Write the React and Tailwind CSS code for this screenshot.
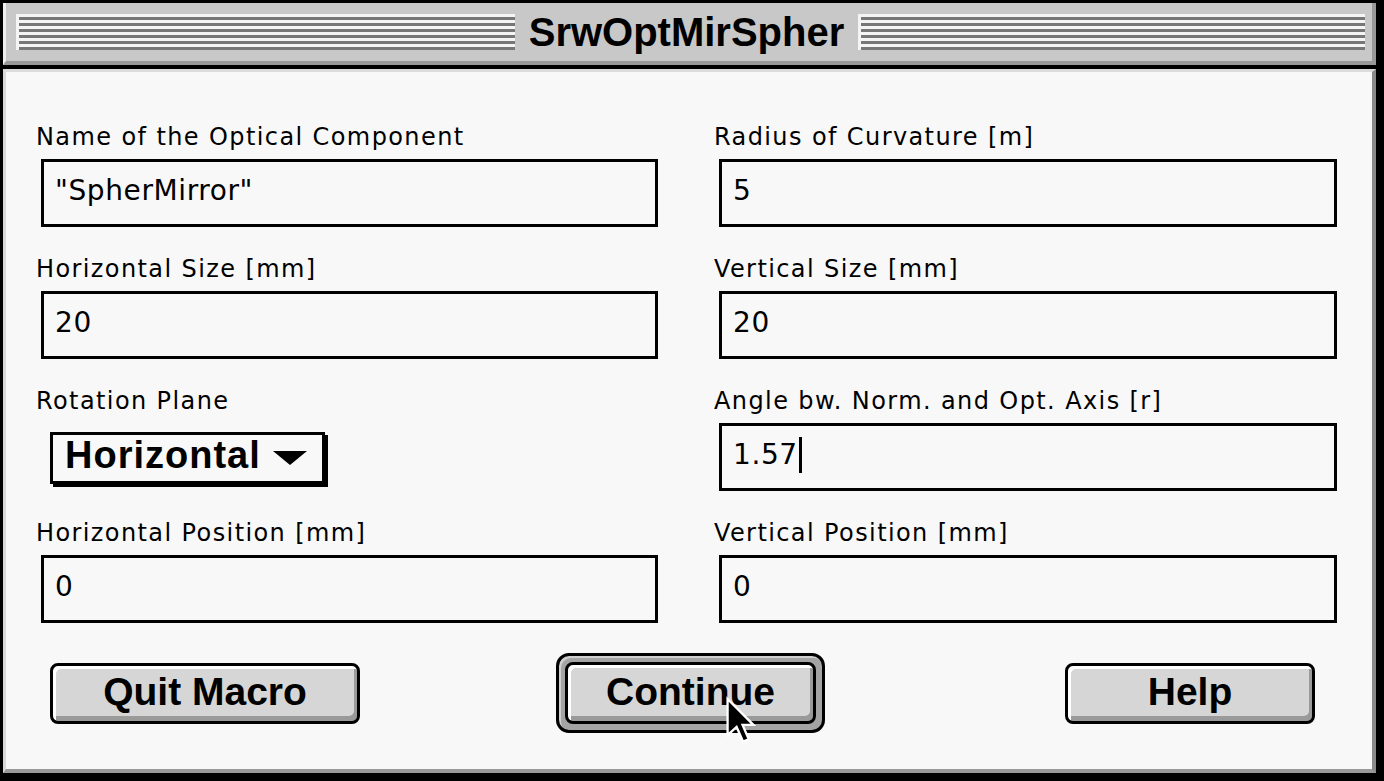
import React from "react";

const sans = { fontFamily: '"DejaVu Sans", "Liberation Sans", sans-serif' };
const chicago = { fontFamily: '"Liberation Sans", Arial, sans-serif' };

function Stripes({ className }) {
  return (
    <div className={"flex flex-col gap-[3px] bg-[#f4f4f4] pt-[3px] " + className}>
      {[0, 1, 2, 3, 4, 5].map((i) => (
        <div key={i} className="ml-[3px] h-[3px] bg-[#777777]" />
      ))}
    </div>
  );
}

function Label({ children }) {
  return (
    <div className="h-[28px] text-[24px] leading-[28px] tracking-[1.4px] text-black whitespace-nowrap" style={sans}>
      {children}
    </div>
  );
}

function TextField({ label, value, caret }) {
  return (
    <div className="flex flex-col">
      <Label>{label}</Label>
      <div className="mt-[8px] ml-[5px] flex h-[68px] items-center border-[3px] border-black bg-[#f8f8f8] pb-[5px] pl-[11px]">
        <span className="text-[28px] leading-[32px] tracking-[0.6px] text-black whitespace-pre" style={sans}>
          {value}
        </span>
        {caret && <span className="ml-[1px] inline-block h-[36px] w-[3px] bg-black" />}
      </div>
    </div>
  );
}

function PopupField({ label, value }) {
  return (
    <div className="flex flex-col">
      <Label>{label}</Label>
      <div className="mt-[17px] ml-[14px] flex h-[52px] w-[275px] items-center border-[3px] border-black bg-[#f8f8f8] pb-[6px] pl-[12px] shadow-[3px_3px_0_#000]">
        <span className="text-[38px] font-bold leading-[38px] tracking-[1px] text-black" style={chicago}>
          {value}
        </span>
        <svg className="ml-[12px] mt-[6px]" width="34" height="14" viewBox="0 0 34 14">
          <polygon points="0,0 34,0 17,14" fill="#000" />
        </svg>
      </div>
    </div>
  );
}

function Button({ children, className }) {
  return (
    <div
      className={
        "flex items-center justify-center rounded-[8px] border-[3px] border-black bg-[#d6d6d6] pb-[4px] shadow-[inset_3px_3px_0_#ffffff,inset_-3px_-5px_0_#9a9a9a] " +
        className
      }
    >
      <span className="text-[39px] font-bold leading-[39px] text-black" style={chicago}>
        {children}
      </span>
    </div>
  );
}

function Cursor() {
  return (
    <svg className="absolute left-[725px] top-[696px]" width="31" height="50" viewBox="0 0 12 19">
      <path d="M1 1 L1 15 L4.5 11.8 L7 17.5 L9.2 16.6 L6.8 11 L11 11 Z" fill="#000" stroke="#fff" strokeWidth="0.9" strokeLinejoin="miter" />
    </svg>
  );
}

export default function App() {
  return (
    <div className="relative flex h-[781px] w-[1384px] flex-col overflow-hidden bg-black pt-[3px] pl-[3px] pr-[8px] pb-[8px]">
      {/* title bar */}
      <div className="flex h-[62px] shrink-0 items-center border-l-[3px] border-r-[4px] border-b-[4px] border-l-[#eeeeee] border-r-[#999999] border-b-[#999999] bg-[#c8c8c8] pl-[10px] pr-[7px]">
        <Stripes className="w-[499px]" />
        <div className="flex w-[343px] justify-center">
          <span className="text-[40px] font-bold leading-[40px] text-black" style={chicago}>
            SrwOptMirSpher
          </span>
        </div>
        <Stripes className="flex-1" />
      </div>
      <div className="h-[4px] shrink-0 bg-black" />

      {/* content */}
      <div className="flex flex-1 flex-col border-t-[3px] border-l-[3px] border-r-[4px] border-b-[4px] border-t-[#dcdcdc] border-l-[#d8d8d8] border-r-[#8a8a8a] border-b-[#999999] bg-[#f8f8f8]">
        <div className="grid grid-cols-[622px_623px] gap-x-[56px] gap-y-[28px] pt-[51px] pl-[30px]">
          <TextField label="Name of the Optical Component" value={'"SpherMirror"'} />
          <TextField label="Radius of Curvature [m]" value="5" />
          <TextField label="Horizontal Size [mm]" value="20" />
          <TextField label="Vertical Size [mm]" value="20" />
          <PopupField label="Rotation Plane" value="Horizontal" />
          <TextField label="Angle bw. Norm. and Opt. Axis [r]" value="1.57" caret />
          <TextField label="Horizontal Position [mm]" value="0" />
          <TextField label="Vertical Position [mm]" value="0" />
        </div>

        <div className="mt-[30px] flex h-[80px] items-center pl-[44px]">
          <Button className="h-[61px] w-[310px]">Quit Macro</Button>
          <div className="ml-[196px] h-[80px] w-[269px] rounded-[13px] border-[3px] border-black bg-[#a4a4a4] p-[6px] shadow-[inset_2px_2px_0_#d0d0d0]">
            <Button className="h-full w-full">Continue</Button>
          </div>
          <Button className="ml-[240px] h-[61px] w-[250px]">Help</Button>
        </div>
      </div>

      <Cursor />
    </div>
  );
}
